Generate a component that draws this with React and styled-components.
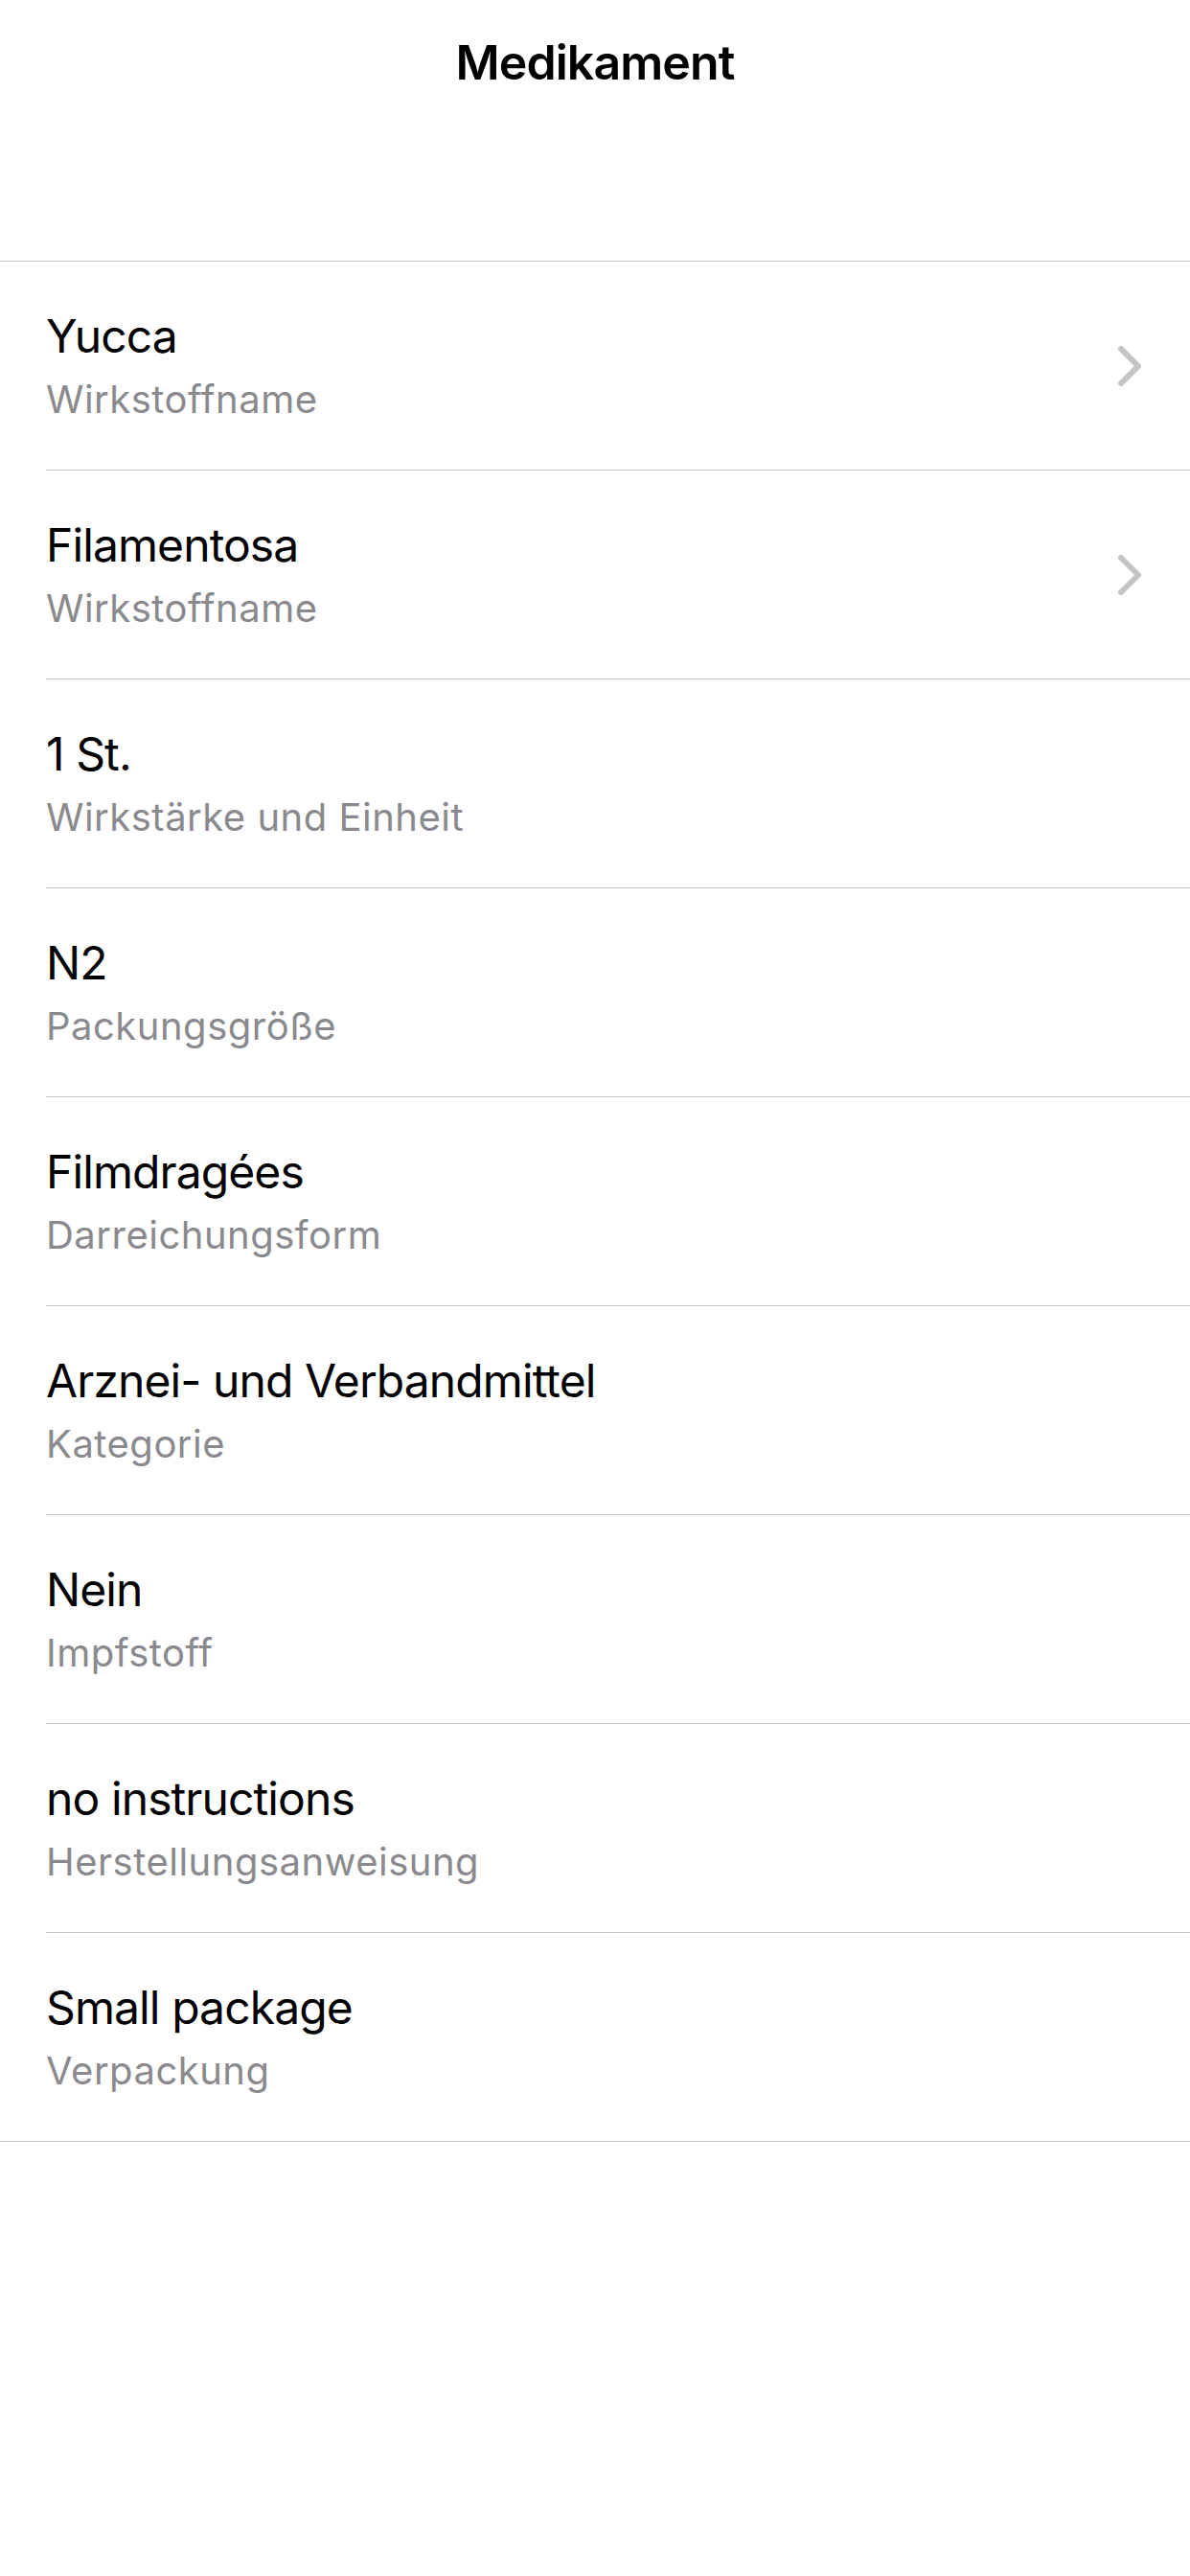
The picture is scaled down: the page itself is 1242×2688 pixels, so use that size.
import React from 'react'
import styled, { createGlobalStyle } from 'styled-components'

const GlobalStyle = createGlobalStyle`
  html, body {
    margin: 0;
    padding: 0;
    background: #ffffff;
  }
  body {
    font-family: Inter, "Noto Sans", sans-serif;
    -webkit-font-smoothing: antialiased;
  }
`

const rows = [
  { value: 'Yucca', label: 'Wirkstoffname', link: true },
  { value: 'Filamentosa', label: 'Wirkstoffname', link: true },
  { value: '1 St.', label: 'Wirkstärke und Einheit' },
  { value: 'N2', label: 'Packungsgröße' },
  { value: 'Filmdragées', label: 'Darreichungsform' },
  { value: 'Arznei- und Verbandmittel', label: 'Kategorie' },
  { value: 'Nein', label: 'Impfstoff' },
  { value: 'no instructions', label: 'Herstellungsanweisung' },
  { value: 'Small package', label: 'Verpackung' },
]

const Screen = styled.div`
  width: 1242px;
  min-height: 2688px;
  background: #ffffff;
`

const NavBar = styled.header`
  height: 272px;
  display: flex;
  justify-content: center;
  align-items: flex-start;
`

const NavTitle = styled.h1`
  margin: 0;
  padding-top: 34px;
  font-size: 50px;
  line-height: 62px;
  font-weight: 600;
  color: #000000;
  letter-spacing: -0.9px;
`

const List = styled.ul`
  list-style: none;
  margin: 0;
  padding: 0;
  border-top: 1px solid #c6c6c8;
  border-bottom: 1px solid #c6c6c8;
`

const Row = styled.li`
  display: flex;
  padding-left: 48px;
`

const Cell = styled.div`
  flex: 1;
  height: 217px;
  display: flex;
  align-items: center;
  padding-right: 50px;
  border-bottom: ${({ $last }) => ($last ? 'none' : '1px solid #c6c6c8')};
`

const Texts = styled.div`
  flex: 1;
  display: flex;
  flex-direction: column;
  gap: 11px;
`

const Value = styled.div`
  font-size: 48px;
  line-height: 60px;
  color: #000000;
  letter-spacing: -0.9px;
`

const Label = styled.div`
  font-size: 40px;
  line-height: 50px;
  color: #8a8a8e;
  letter-spacing: 0.5px;
`

const Chevron = () => (
  <svg width="26" height="44" viewBox="0 0 26 44" fill="none">
    <polyline
      points="4,4 22,22 4,40"
      stroke="#c4c4c7"
      strokeWidth="6"
      strokeLinecap="round"
      strokeLinejoin="round"
    />
  </svg>
)

export default function App() {
  return (
    <Screen>
      <GlobalStyle />
      <NavBar>
        <NavTitle>Medikament</NavTitle>
      </NavBar>
      <List>
        {rows.map((row, i) => (
          <Row key={i}>
            <Cell $last={i === rows.length - 1}>
              <Texts>
                <Value>{row.value}</Value>
                <Label>{row.label}</Label>
              </Texts>
              {row.link && <Chevron />}
            </Cell>
          </Row>
        ))}
      </List>
    </Screen>
  )
}
